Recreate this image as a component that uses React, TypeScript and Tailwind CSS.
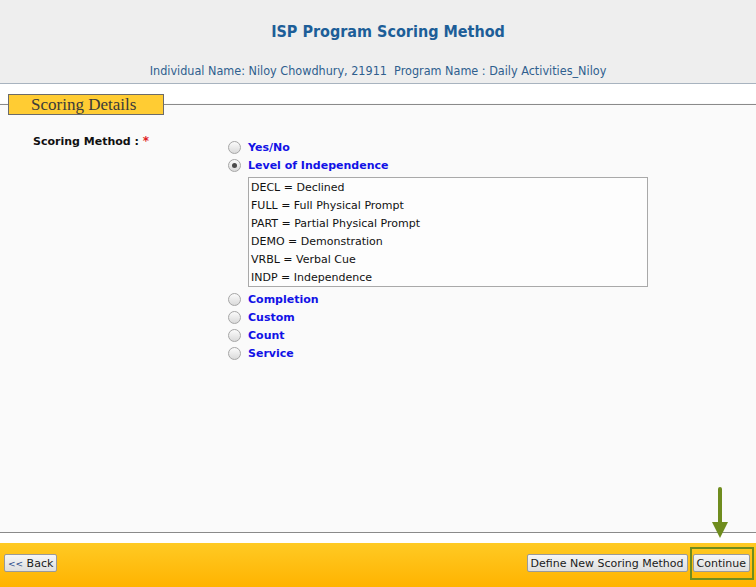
import React from 'react';

// ─── Radio ──────────────────────────────────────────────

function Radio({ checked }: { checked?: boolean }) {
  return (
    <span className="w-[13px] h-[13px] rounded-full border border-[#a6a6a6] bg-[linear-gradient(to_bottom,#fbfbfb,#dadada)] flex items-center justify-center flex-shrink-0">
      {checked && <span className="w-[5px] h-[5px] rounded-full bg-[#4a4a4a]" />}
    </span>
  );
}

function Option({ label, checked }: { label: string; checked?: boolean }) {
  return (
    <div className="h-[18px] flex items-center gap-[7px]">
      <Radio checked={checked} />
      <span className="text-[11px] font-bold text-[#1212e6] leading-none pt-[1px]">{label}</span>
    </div>
  );
}

const LEVELS = [
  'DECL = Declined',
  'FULL = Full Physical Prompt',
  'PART = Partial Physical Prompt',
  'DEMO = Demonstration',
  'VRBL = Verbal Cue',
  'INDP = Independence',
];

function Button({ children }: { children: React.ReactNode }) {
  return (
    <button className="h-[18px] px-[3px] text-[11px] leading-none text-[#1a1a1a] border border-[#9a9a9a] rounded-[2px] bg-[linear-gradient(to_bottom,#f6f6f6,#dedede)]">
      {children}
    </button>
  );
}

export default function App() {
  return (
    <div
      className="relative w-[756px] h-[587px] flex flex-col bg-white overflow-hidden"
      style={{ fontFamily: '"DejaVu Sans", Verdana, sans-serif' }}
    >
      {/* Header */}
      <div className="h-[84px] flex-shrink-0 bg-[#eeeeee] border-b border-[#a8b3bf] flex flex-col items-center">
        <h1
          className="mt-[20px] pl-[20px] text-[16px] font-bold text-[#1d5e98] leading-[24px]"
          style={{ fontFamily: '"DejaVu Sans Condensed", "DejaVu Sans", sans-serif' }}
        >
          ISP Program Scoring Method
        </h1>
        <p
          className="mt-[20px] text-[12.5px] text-[#2f5f8e] leading-[14px] whitespace-pre"
          style={{ fontFamily: '"DejaVu Sans Condensed", "DejaVu Sans", sans-serif' }}
        >
          Individual Name: Niloy Chowdhury, 21911  Program Name : Daily Activities_Niloy
        </p>
      </div>

      {/* Section legend */}
      <div className="flex-shrink-0 pt-[10px] bg-[linear-gradient(to_bottom,#ffffff_60%,#fafafa_60%)]">
        <div className="flex items-center">
          <div className="w-[8px] border-t border-[#8a8a8a]" />
          <div
            className="w-[156px] h-[21px] bg-[#ffcc33] border border-[#6b6b6b] pl-[22px] text-[17px] leading-[19px] text-[#3a3a3a]"
            style={{ fontFamily: '"Liberation Serif", "DejaVu Serif", serif' }}
          >
            Scoring Details
          </div>
          <div className="flex-1 border-t border-[#8a8a8a]" />
        </div>
      </div>

      {/* Content */}
      <div className="flex-1 bg-[#fafafa] flex">
        <div className="w-[228px] pl-[33px] pt-[13px]">
          <span className="text-[11px] font-bold text-[#111] leading-[15px]">
            Scoring Method : <span className="text-[#e02020] text-[12px]">*</span>
          </span>
        </div>
        <div className="pt-[23px] flex flex-col">
          <Option label="Yes/No" />
          <Option label="Level of Independence" checked />
          <div className="ml-[20px] mt-[3px] mb-[3px] w-[400px] border border-[#a9a9a9] bg-[#fdfdfd]">
            {LEVELS.map((l) => (
              <div key={l} className="h-[18px] pl-[2px] flex items-center text-[11px] text-[#111] leading-none">
                {l}
              </div>
            ))}
          </div>
          <Option label="Completion" />
          <Option label="Custom" />
          <Option label="Count" />
          <Option label="Service" />
        </div>
      </div>

      {/* Bottom */}
      <div className="flex-shrink-0 h-[11px] border-t border-[#8a8a8a] bg-white" />
      <div className="flex-shrink-0 h-[44px] bg-[linear-gradient(to_bottom,#ffca24,#ffb300)] flex items-center justify-between pl-[4px] pr-[6px] pb-[4px]">
        <Button>
          <span className="text-[9px] text-[#2a4a8a]">&lt;&lt;</span> Back
        </Button>
        <div className="flex items-center gap-[5px]">
          <Button>Define New Scoring Method</Button>
          <Button>Continue</Button>
        </div>
      </div>

      {/* Highlight overlay */}
      <div className="absolute left-[690px] top-[547px] w-[64px] h-[33px] border-2 border-[#6f8c1e]" />
      <svg className="absolute left-[710px] top-[487px]" width="20" height="52" viewBox="0 0 20 52">
        <rect x="8" y="0" width="4" height="37" rx="2" fill="#6f8c1e" />
        <polygon points="2,35 18,35 10,51" fill="#6f8c1e" />
      </svg>
    </div>
  );
}
